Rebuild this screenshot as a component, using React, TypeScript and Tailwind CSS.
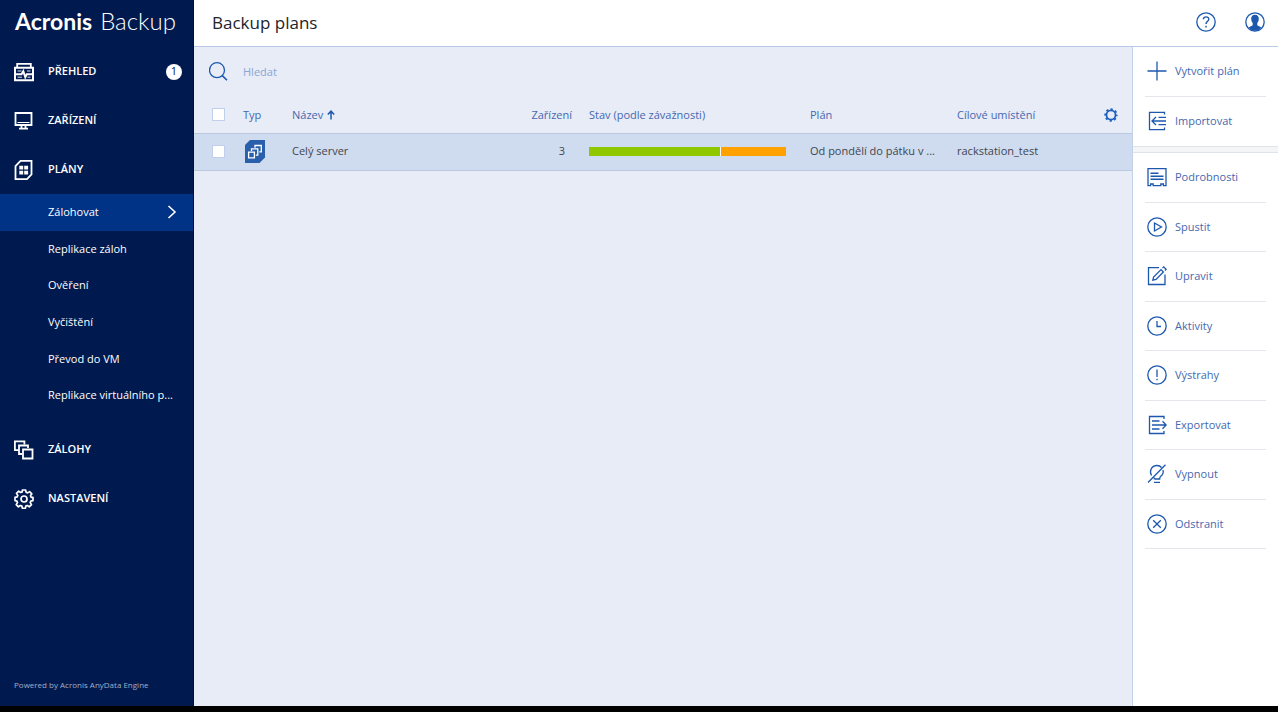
import type { ReactNode } from 'react';

type IconProps = { children: ReactNode; className?: string };

function Icon({ children, className = '' }: IconProps) {
  return (
    <svg
      viewBox="0 0 20 20"
      fill="none"
      stroke="currentColor"
      strokeWidth="1.3"
      aria-hidden="true"
      className={`size-5 shrink-0 ${className}`}
    >
      {children}
    </svg>
  );
}

const overviewIcon = (
  <Icon>
    <path d="M3.200 5V1.900h13.600V5" strokeWidth="1.800" />
    <path d="M1 5.700h18v12.600H1z" strokeWidth="2" />
    <path d="M3.500 9h4M13 9h3.500M3.500 15.200h4.500M13.500 15.200h3" strokeWidth=".9" />
    <path d="M2 12.200h5.500l1.800-3 2 6 1.500-3H18" strokeWidth="2" />
  </Icon>
);

const devicesIcon = (
  <Icon>
    <path d="M1.500 2h16v12h-16z" strokeWidth="1.800" />
    <path d="M3.500 11.500h12" strokeWidth="1" />
    <path d="M7.500 14.500v3M11.500 14.500v3M5 17.700h9" strokeWidth="1.800" />
  </Icon>
);

const plansIcon = (
  <Icon>
    <path d="M6.500 .9h11v13.600L13 19.100H1.500V6z" strokeWidth="1.800" />
    <path d="M5.300 5.700h3.900v3.900H5.300zM10.200 5.700h3.900v3.900h-3.900zM5.300 10.700h3.900v3.900H5.300zM10.200 10.700h3.900v3.900h-3.900z" fill="currentColor" stroke="none" />
  </Icon>
);

const backupsIcon = (
  <Icon>
    <path d="M9 9.500h9.500v9H9z" strokeWidth="1.800" />
    <path d="M8 14H5V5.500h9V8M4.500 10.200H.9V1.300h9.500v3" strokeWidth="1.800" />
  </Icon>
);

const gearPath =
  'M8.400 1h3.200l.5 2.300 1.500.6 2-1.300 2.200 2.200-1.300 2 .6 1.500L19 8.400v3.200l-2.200.5-.6 1.500 1.300 2-2.200 2.200-2-1.300-1.500.6-.4 2.200H8.400l-.5-2.200-1.500-.6-2 1.300-2.200-2.200 1.300-2-.6-1.500L1 11.600V8.400l2.200-.5.600-1.500-1.300-2 2.200-2.200 2 1.300 1.500-.6z';

const settingsIcon = (
  <Icon>
    <path d={gearPath} strokeWidth="1.700" strokeLinejoin="round" />
    <circle cx="10" cy="10" r="3" strokeWidth="1.700" />
  </Icon>
);

const subItems = [
  'Zálohovat',
  'Replikace záloh',
  'Ověření',
  'Vyčištění',
  'Převod do VM',
  'Replikace virtuálního p...',
];

const createActions = [
  { label: 'Vytvořit plán', icon: <Icon><path d="M10 .5v19M.5 10h19" /></Icon> },
  {
    label: 'Importovat',
    icon: (
      <Icon>
        <path d="M17.500 3.500V1.300h-15v17.400h15v-2.200" />
        <path d="M5 10h14M9 6l-4 4 4 4M11.500 6.300H19M11.500 13.700H19" />
      </Icon>
    ),
  },
];

const planActions = [
  {
    label: 'Podrobnosti',
    icon: (
      <Icon>
        <path d="M1 1.600h18v17h-2.600V17h-2.600v1.600H6.200V17H3.600v1.600H1z" />
        <path d="M3.500 6.200h8M3.500 9.200h13M3.500 12.200h13" strokeWidth="1.500" />
      </Icon>
    ),
  },
  { label: 'Spustit', icon: <Icon><circle cx="10" cy="10" r="9.200" /><path d="M7.500 6l7 4-7 4z" /></Icon> },
  {
    label: 'Upravit',
    icon: (
      <Icon>
        <path d="M12 1.700H1.500v16.800H18V8.500" />
        <path d="M5.800 14.200l.8-3.200 7.400-7.400 2.400 2.400L9 13.400zM15.500 2.100l1.200-1.200 2.400 2.400-1.200 1.200" />
      </Icon>
    ),
  },
  { label: 'Aktivity', icon: <Icon><circle cx="10" cy="10" r="9.200" /><path d="M10 5v5.500h4" /></Icon> },
  { label: 'Výstrahy', icon: <Icon><circle cx="10" cy="10" r="9.200" /><path d="M10 4.500v7.500M10 13.700v1.600" /></Icon> },
  {
    label: 'Exportovat',
    icon: (
      <Icon>
        <path d="M17 4V1.500H2.500v17H17V16" />
        <path d="M5 10h14M15.500 6.200L19.200 10l-3.700 3.800M5 6h7.500M5 14h7.500" />
      </Icon>
    ),
  },
  {
    label: 'Vypnout',
    icon: (
      <Icon>
        <path d="M18.500.8L1 18.500M4.500 11.500C2 7 4.500 1.500 10 1.500c2 0 3.500.7 4.500 2M16 6c.8 3-.5 5-2.500 6.500-.7.6-.8 1.500-.8 2.500H8M7 18.400h6M7.300 15.500v-2" />
      </Icon>
    ),
  },
  {
    label: 'Odstranit',
    icon: <Icon><circle cx="10" cy="10" r="9.200" /><path d="M6.200 6.200l7.600 7.600M13.800 6.200l-7.600 7.600" /></Icon>,
  },
];

function NavItem({ icon, label, badge }: { icon: ReactNode; label: string; badge?: number }) {
  return (
    <a href="#" className="flex h-[49px] items-center gap-3.5 pl-3.5 pr-[11px] text-[11px] font-semibold text-white">
      {icon}
      <span className="flex-1">{label}</span>
      {badge !== undefined && (
        <span className="flex size-4 items-center justify-center rounded-full bg-white font-normal text-[#001a4f]">{badge}</span>
      )}
    </a>
  );
}

function ActionList({ actions }: { actions: { label: string; icon: ReactNode }[] }) {
  return (
    <>
      {actions.map(({ label, icon }) => (
        <li key={label} className="mx-3 border-b border-[#e3e7ec] group-first:last:border-transparent">
          <button type="button" className="flex h-full w-full items-center gap-2 pl-0.5 text-left text-[#4668b0]">
            <span className="text-[#1c58ae]">{icon}</span>
            {label}
          </button>
        </li>
      ))}
    </>
  );
}

function Sidebar() {
  return (
    <aside className="flex w-[194px] shrink-0 flex-col border-r border-[#000a45] bg-[#001a4f]">
      <div className="flex h-[47px] items-baseline gap-2 pl-[15px] pt-[5px] font-['Lato',sans-serif] text-white">
        <span className="text-[23px] font-bold leading-8">Acronis</span>
        <span className="text-[24px] font-light leading-8">Backup</span>
      </div>
      <nav>
        <NavItem icon={overviewIcon} label="PŘEHLED" badge={1} />
        <NavItem icon={devicesIcon} label="ZAŘÍZENÍ" />
        <NavItem icon={plansIcon} label="PLÁNY" />
        <ul className="mb-[11px] grid h-[220px] auto-rows-fr text-white">
          {subItems.map((item, index) => (
            <li key={item} className={index === 0 ? 'bg-[#003285]' : ''}>
              <a href="#" className="flex h-full items-center justify-between whitespace-nowrap pl-12 pr-4">
                <span>{item}</span>
                {index === 0 && (
                  <svg viewBox="0 0 10 14" fill="none" stroke="currentColor" strokeWidth="1.600" aria-hidden="true" className="h-3.5 w-2.5 shrink-0">
                    <path d="M1.500 1l6.500 6-6.500 6" />
                  </svg>
                )}
              </a>
            </li>
          ))}
        </ul>
        <NavItem icon={backupsIcon} label="ZÁLOHY" />
        <NavItem icon={settingsIcon} label="NASTAVENÍ" />
      </nav>
      <p className="mt-auto pb-[13px] pl-3.5 text-[8px] font-medium leading-4 text-[#a3aec8]">Powered by Acronis AnyData Engine</p>
    </aside>
  );
}

const checkboxClass = 'block size-[13px] appearance-none border border-[#c0d0ea] bg-white checked:bg-[#1c58ae]';

function PlansTable() {
  return (
    <table className="w-full table-fixed border-collapse text-left">
      <colgroup>
        <col className="w-[49px]" />
        <col className="w-[49px]" />
        <col />
        <col className="w-[69px]" />
        <col className="w-[221px]" />
        <col className="w-[147px]" />
        <col className="w-[134px]" />
        <col className="w-[41px]" />
      </colgroup>
      <thead className="text-[#4668b0]">
        <tr className="h-[37px] *:p-0 *:pt-px *:font-normal">
          <th><input type="checkbox" aria-label="Vybrat vše" className={`ml-[18px] ${checkboxClass}`} /></th>
          <th>Typ</th>
          <th aria-sort="ascending">
            <button type="button" className="flex items-center gap-1">
              Název
              <svg viewBox="0 0 8 10" fill="none" stroke="#1c58ae" strokeWidth="1.500" aria-hidden="true" className="h-2.5 w-2">
                <path d="M4 9.500V1.500M.8 4.500L4 1.200l3.200 3.300" />
              </svg>
            </button>
          </th>
          <th className="text-right"><span className="mr-[17px]">Zařízení</span></th>
          <th>Stav (podle závažnosti)</th>
          <th>Plán</th>
          <th>Cílové umístění</th>
          <th>
            <button type="button" aria-label="Nastavení sloupců" className="ml-[13px] block text-[#1c5fbe]">
              <svg viewBox="0 0 20 20" fill="none" stroke="currentColor" aria-hidden="true" className="size-3.5">
                <circle cx="10" cy="10" r="6.500" strokeWidth="2.600" />
                <circle cx="10" cy="10" r="8.300" strokeWidth="2.400" strokeDasharray="3.260 3.260" strokeDashoffset="1.630" />
              </svg>
            </button>
          </th>
        </tr>
      </thead>
      <tbody className="text-[#3f4650]">
        <tr className="h-[37px] border-y border-[#b8c9e2] bg-[#cfdbee] *:p-0">
          <td><input type="checkbox" aria-label="Vybrat Celý server" className={`ml-[18px] ${checkboxClass}`} /></td>
          <td>
            <svg viewBox="0 0 20 23" fill="none" aria-hidden="true" className="ml-0.5 h-[23px] w-5">
              <path d="M5 0h15v17.500L14.500 23H0V5z" fill="#2a5fac" />
              <g stroke="#fff" strokeWidth="1.300">
                <path d="M3.600 12.100h5.800v5.800H3.600z" />
                <path d="M6.500 11V8.800h6.300v6.300h-2M10 7.700V5.500h6.300v6.300h-2" />
              </g>
            </svg>
          </td>
          <td>Celý server</td>
          <td className="text-right"><span className="mr-6">3</span></td>
          <td>
            <div role="img" aria-label="2 v pořádku, 1 varování" className="flex h-[9px] w-[197px] gap-px bg-white">
              <div className="flex-2 bg-[#8fc800]" />
              <div className="flex-1 bg-[#ffa200]" />
            </div>
          </td>
          <td className="whitespace-nowrap">Od pondělí do pátku v ...</td>
          <td>rackstation_test</td>
          <td />
        </tr>
      </tbody>
    </table>
  );
}

export default function App() {
  return (
    <div className="flex min-h-screen flex-col border-b-6 border-black bg-white font-['Open_Sans',sans-serif] text-[11px]">
      <div className="flex flex-1">
        <Sidebar />
        <div className="flex min-w-0 flex-1 flex-col">
          <header className="flex h-[47px] items-center justify-between border-b border-[#b9c9e6] pl-[18px] pr-[13px]">
            <h1 className="text-[17px] text-[#20242c]">Backup plans</h1>
            <div className="flex gap-[29px] pb-0.5 text-[#1c58ae]">
              <button type="button" aria-label="Nápověda">
                <Icon>
                  <circle cx="10" cy="10" r="9.200" />
                  <path d="M7.300 7.200c.3-3.200 5.600-3 5.500 0 0 2-2.800 2.200-2.800 4.800M10 13.700v1.700" strokeWidth="1.400" />
                </Icon>
              </button>
              <button type="button" aria-label="Účet">
                <Icon>
                  <circle cx="10" cy="10" r="9.200" />
                  <path d="M10 2.800c2.700 0 3.900 1.700 3.800 4.100-.1 2-.8 3.200-1.500 4.100v2.200c.8 1 2.700 1.200 4 2.200-1.400 2-3.700 3.400-6.300 3.400s-4.900-1.400-6.300-3.400c1.300-1 3.200-1.200 4-2.200V11C7 10.100 6.300 8.900 6.200 6.900 6.100 4.500 7.300 2.800 10 2.800z" fill="currentColor" stroke="none" />
                </Icon>
              </button>
            </div>
          </header>
          <div className="flex flex-1">
            <main className="min-w-0 flex-1 bg-[#e7ecf7]">
              <label className="flex h-[49px] items-center gap-3.5 pl-[15px] pt-px">
                <Icon className="text-[#1c58ae]">
                  <circle cx="8" cy="8.200" r="7.500" />
                  <path d="M13.300 13.600l4.700 4.700" strokeWidth="1.600" />
                </Icon>
                <input type="text" aria-label="Hledat" placeholder="Hledat" className="flex-1 bg-transparent text-[#3f4650] outline-none placeholder:text-[#8ba5d3]" />
              </label>
              <PlansTable />
            </main>
            <aside className="w-[146px] shrink-0 border-l border-[#c3d2ea] bg-white">
              <ul className="group grid h-[99px] auto-rows-fr"><ActionList actions={createActions} /></ul>
              <div className="h-[7px] border-y border-[#dfe4eb] bg-[#f3f5f7]" />
              <ul className="grid h-[396px] auto-rows-fr"><ActionList actions={planActions} /></ul>
            </aside>
          </div>
        </div>
      </div>
    </div>
  );
}
